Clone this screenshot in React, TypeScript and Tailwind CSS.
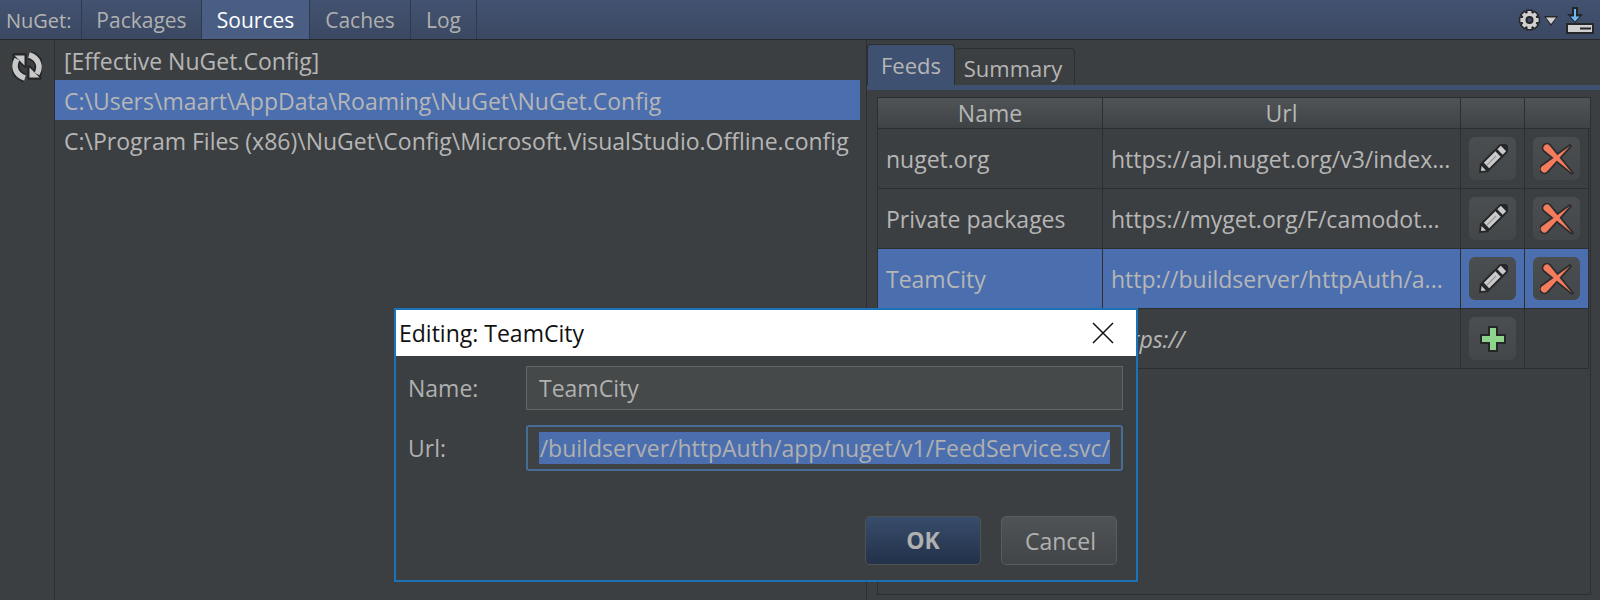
import React from 'react';

const font = "font-['Open_Sans','Noto_Sans',sans-serif]";

const RefreshIcon = () => (
  <svg width="30" height="30" viewBox="0 0 30 30">
    <g fill="#242628" stroke="#242628" strokeWidth="3.500" strokeLinejoin="round">
      <path d="M2 3 H13 V14 Z" />
      <path d="M28 26 H17 V15 Z" />
    </g>
    <g fill="none" stroke="#242628" strokeWidth="9">
      <path d="M5 7 C1 14 3 23 13 26" />
      <path d="M25 22 C29 15 27 6 17 3" />
    </g>
    <g fill="#c9c9c9">
      <path d="M2.500 3.500 H12.500 V13.500 Z" />
      <path d="M27.500 25.500 H17.500 V15.500 Z" />
    </g>
    <g fill="none" stroke="#c9c9c9" strokeWidth="5.500">
      <path d="M5 7 C1 14 3 23 13 26" />
      <path d="M25 22 C29 15 27 6 17 3" />
    </g>
  </svg>
);

const GearIcon = () => (
  <svg width="23" height="24" viewBox="0 0 24 24">
    <path d="M12 1 V23 M1 12 H23 M4.200 4.200 L19.800 19.800 M19.800 4.200 L4.200 19.800" stroke="#242628" strokeWidth="7" />
    <circle cx="12" cy="12" r="9.500" fill="#242628" />
    <path d="M12 2.500 V21.500 M2.500 12 H21.500 M5.300 5.300 L18.700 18.700 M18.700 5.300 L5.300 18.700" stroke="#d0d0d0" strokeWidth="4" />
    <circle cx="12" cy="12" r="7.500" fill="#d0d0d0" />
    <circle cx="12" cy="12" r="3.200" fill="#3e4d68" stroke="#242628" strokeWidth="2" />
  </svg>
);

const DownloadIcon = () => (
  <svg width="28" height="27" viewBox="0 0 28 27" className="mt-[2px]">
    <rect x="0" y="16" width="28" height="11" fill="#242628" />
    <rect x="2" y="18" width="24" height="7" fill="#d0d0d0" />
    <rect x="14" y="20.500" width="11" height="2" fill="#242628" />
    <path d="M6 0 H12 V7 H17 L9 16 L1 7 H6 Z" fill="#242628" />
    <path d="M8 2 H10 V9.500 H13.500 L9 14.500 L4.500 9.500 H8 Z" fill="#6fb7f5" />
  </svg>
);

const PencilIcon = () => (
  <svg width="30" height="30" viewBox="0 0 30 30">
    <path d="M8 22 L25 5" stroke="#242628" strokeWidth="11.500" strokeLinecap="round" />
    <path d="M1 29 L2 19 L11 28 Z" fill="#242628" />
    <path d="M8.500 21.500 L20 10" stroke="#cbcbcb" strokeWidth="7.500" />
    <path d="M9 21 L18 12" stroke="#9b9b9b" strokeWidth="1.500" />
    <path d="M22 8 L25.500 4.500" stroke="#cbcbcb" strokeWidth="7.500" />
    <path d="M3 27 L3.600 22 L8 26.400 Z" fill="#cbcbcb" />
  </svg>
);

const DeleteIcon = () => (
  <svg width="34" height="34" viewBox="0 0 34 34">
    <g fill="#f47b5c" stroke="#2a2c2e" strokeWidth="3.500" strokeLinejoin="round">
      <path d="M4.500 8.500 A3.500 3.500 0 0 1 9.500 3.500 L32 31 Z" />
      <path d="M1.800 24.500 L30 4 L7 29.500 A3.500 3.500 0 0 1 1.800 24.500 Z" />
    </g>
    <g fill="#f47b5c">
      <path d="M4.500 8.500 A3.500 3.500 0 0 1 9.500 3.500 L32 31 Z" />
      <path d="M1.800 24.500 L30 4 L7 29.500 A3.500 3.500 0 0 1 1.800 24.500 Z" />
    </g>
  </svg>
);

const PlusIcon = () => (
  <svg width="26" height="26" viewBox="0 0 26 26">
    <path d="M8 0 H18 V8 H26 V18 H18 V26 H8 V18 H0 V8 H8 Z" fill="#242628" />
    <path d="M10 2 H16 V10 H24 V16 H16 V24 H10 V16 H2 V10 H10 Z" fill="#8fd48c" />
  </svg>
);

const IconButton = ({ children }: { children: React.ReactNode }) => (
  <div className="w-[47px] h-[43px] rounded-md bg-gradient-to-b from-[#4a4e50] to-[#434749] flex items-center justify-center">
    {children}
  </div>
);

const tabs = [
  { label: 'Packages', w: 'w-[120px]' },
  { label: 'Sources', w: 'w-[108px]', active: true },
  { label: 'Caches', w: 'w-[101px]' },
  { label: 'Log', w: 'w-[66px]' },
];

const feeds = [
  { name: 'nuget.org', url: 'https://api.nuget.org/v3/index...' },
  { name: 'Private packages', url: 'https://myget.org/F/camodot...' },
  { name: 'TeamCity', url: 'http://buildserver/httpAuth/a...', selected: true },
];

const Toolbar = () => (
  <div className="h-[40px] shrink-0 flex items-stretch bg-gradient-to-b from-[#435270] to-[#3a4862] border-b border-[#26282a]">
    <div className="w-[81px] pl-[6px] pt-[3px] flex items-center text-[20px] text-[#b4b4b4]">NuGet:</div>
    {tabs.map(t => (
      <div
        key={t.label}
        className={`${t.w} pt-[3px] flex items-center justify-center text-[21px] border-l border-[#2f3a4e] ${
          t.active ? 'bg-[#4a5e84] text-white' : 'text-[#b0b0b0]'
        }`}
      >
        {t.label}
      </div>
    ))}
    <div className="border-l border-[#2f3a4e]" />
    <div className="ml-auto flex items-center pr-[6px]">
      <GearIcon />
      <svg width="14" height="10" viewBox="0 0 14 10" className="ml-[3px] mr-[8px] mt-[2px]">
        <path d="M0 0 H14 L7 10 Z" fill="#242628" />
        <path d="M2 1.500 H12 L7 8 Z" fill="#d0d0d0" />
      </svg>
      <DownloadIcon />
    </div>
  </div>
);

const SourceList = () => (
  <div className="w-[805px] shrink-0 text-[23px] text-[#b6b6b6]">
    <div className="h-[40px] pl-[9px] pt-[3px] flex items-center">[Effective NuGet.Config]</div>
    <div className="h-[40px] pl-[9px] pt-[3px] flex items-center bg-[#4b6eaf]">C:\Users\maart\AppData\Roaming\NuGet\NuGet.Config</div>
    <div className="h-[40px] pl-[9px] pt-[3px] flex items-center whitespace-nowrap">C:\Program Files (x86)\NuGet\Config\Microsoft.VisualStudio.Offline.config</div>
  </div>
);

const FeedRow = ({ name, url, selected }: { name: string; url: string; selected?: boolean }) => (
  <div className={`flex w-[711px] h-[60px] border-b border-[#2c2e30] ${selected ? 'bg-[#4b6eaf]' : ''}`}>
    <div className="w-[225px] pl-[8px] pt-[2px] flex items-center border-r border-[#2c2e30]">{name}</div>
    <div className="w-[358px] pl-[8px] pt-[2px] flex items-center whitespace-nowrap border-r border-[#2c2e30]">{url}</div>
    <div className="w-[64px] flex items-center justify-center border-r border-[#2c2e30]">
      <IconButton>
        <PencilIcon />
      </IconButton>
    </div>
    <div className="w-[64px] flex items-center justify-center border-r border-[#2c2e30]">
      <IconButton>
        <DeleteIcon />
      </IconButton>
    </div>
  </div>
);

const FeedsPanel = () => (
  <div className="flex-1 flex flex-col pt-[4px] border-l border-[#2c2e30] ml-[6px]">
    <div className="flex items-end h-[41px] text-[22px] text-[#b6b6b6]">
      <div className="w-[88px] h-[41px] rounded-t bg-[#3f5170] border border-b-0 border-[#2c2e30] flex items-center justify-center">Feeds</div>
      <div className="w-[120px] h-[37px] pt-[2px] pr-[3px] rounded-t border border-b-0 border-l-0 border-[#2c2e30] flex items-center justify-center">Summary</div>
    </div>
    <div className="h-[5px] bg-[#3f5170]" />
    <div className="mt-[7px] ml-[10px] mr-[9px] h-[498px] border border-[#2c2e30] text-[23px] text-[#b6b6b6]">
      <div className="flex h-[31px] border-b border-[#2c2e30] bg-gradient-to-b from-[#505456] to-[#3f4345]">
        <div className="w-[225px] pt-[1px] flex items-center justify-center border-r border-[#2c2e30]">Name</div>
        <div className="w-[358px] pt-[1px] flex items-center justify-center border-r border-[#2c2e30]">Url</div>
        <div className="w-[64px] border-r border-[#2c2e30]" />
        <div className="w-[64px]" />
      </div>
      {feeds.map(f => (
        <FeedRow key={f.name} {...f} />
      ))}
      <div className="flex w-[711px] h-[60px] border-b border-[#2c2e30]">
        <div className="w-[225px] border-r border-[#2c2e30]" />
        <div className="w-[358px] pl-[8px] pt-[2px] flex items-center italic border-r border-[#2c2e30]">https://</div>
        <div className="w-[64px] flex items-center justify-center border-r border-[#2c2e30]">
          <IconButton>
            <PlusIcon />
          </IconButton>
        </div>
        <div className="w-[64px] border-r border-[#2c2e30]" />
      </div>
    </div>
  </div>
);

const EditDialog = () => (
  <div className="absolute left-[394px] top-[308px] w-[744px] h-[274px] border-2 border-[#1a73b9] bg-[#3c3f41] flex flex-col text-[23px] text-[#b0b0b0]">
    <div className="h-[46px] bg-white text-[#111] flex items-center justify-between pl-[3px] pr-[22px]">
      <span>Editing: TeamCity</span>
      <svg width="22" height="22" viewBox="0 0 22 22">
        <path d="M1 1 L21 21 M21 1 L1 21" stroke="#111" strokeWidth="1.500" fill="none" />
      </svg>
    </div>
    <div className="flex items-center mt-[10px] pl-[12px] pr-[13px]">
      <div className="w-[118px] pt-[1px]">Name:</div>
      <div className="w-[597px] h-[44px] bg-[#45494a] border border-[#646464] pl-[12px] pt-[1px] flex items-center">TeamCity</div>
    </div>
    <div className="flex items-center mt-[15px] pl-[12px] pr-[13px]">
      <div className="w-[118px]">Url:</div>
      <div className="w-[597px] h-[46px] bg-[#3f4244] border-2 border-[#466d94] rounded-[3px] px-[11px] flex items-center">
        <div className="w-full h-[32px] flex justify-end bg-[#4b6eaf]">
          <span className="whitespace-nowrap leading-[32px]">/buildserver/httpAuth/app/nuget/v1/FeedService.svc/</span>
        </div>
      </div>
    </div>
    <div className="flex justify-end gap-[20px] mt-[45px] pr-[19px]">
      <div className="w-[116px] h-[49px] rounded-[5px] border border-[#4f5254] bg-gradient-to-b from-[#384d6c] to-[#233149] flex items-center justify-center font-bold">OK</div>
      <div className="w-[116px] h-[49px] pt-[1px] pl-[3px] rounded-[5px] border border-[#5a5d5f] bg-gradient-to-b from-[#4f5355] to-[#414547] flex items-center justify-center">Cancel</div>
    </div>
  </div>
);

export default function App() {
  return (
    <div className={`relative w-[1600px] h-[600px] overflow-hidden bg-[#3c3f41] flex flex-col ${font}`}>
      <Toolbar />
      <div className="flex-1 flex min-h-0">
        <div className="w-[55px] shrink-0 border-r border-[#2c2e30] pt-[12px] flex justify-center items-start">
          <RefreshIcon />
        </div>
        <SourceList />
        <FeedsPanel />
      </div>
      <EditDialog />
    </div>
  );
}
